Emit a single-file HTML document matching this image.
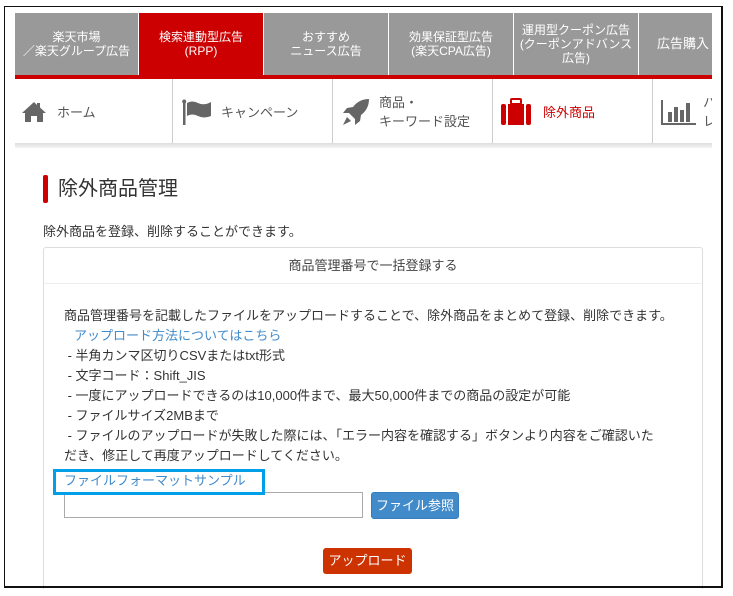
<!DOCTYPE html>
<html><head><meta charset="utf-8"><style>
*{box-sizing:border-box;margin:0;padding:0}
body{width:733px;height:596px;background:#fff;font-family:"Liberation Sans","Noto Sans CJK JP",sans-serif;color:#333;position:relative;overflow:hidden}
.frame{position:absolute;left:4px;top:6px;width:719px;height:582px;border:2px solid #111;border-top-width:1px;border-left-width:1px;z-index:5}
.clip{position:absolute;left:15px;top:13px;width:697px;height:135px;overflow:hidden}
.tabs{position:absolute;left:0;top:0;height:62px;width:760px;background:#999}
.tab{position:absolute;top:0;height:62px;width:125px;color:#fff;font-size:12px;line-height:14px;text-align:center;display:flex;align-items:center;justify-content:center;border-right:1px solid #fff}
.redline{position:absolute;left:0;top:62px;width:697px;height:4px;background:#c00}
.nav{position:absolute;left:0;top:66px;height:65px;width:760px;background:#fff}
.ni{position:absolute;top:0;height:65px;border-right:1px solid #ccc;display:flex;align-items:center;font-size:13px;color:#555}
.shadow{position:absolute;left:0;top:130px;width:697px;height:5px;background:linear-gradient(#ddd,#f4f4f4)}
.abs{position:absolute}
</style></head><body>
<div class="frame"></div>
<div class="clip">
 <div class="tabs">
  <div class="tab" style="left:0;width:124px">楽天市場<br>／楽天グループ広告</div>
  <div class="tab" style="left:124px;background:#c00">検索連動型広告<br>(RPP)</div>
  <div class="tab" style="left:249px">おすすめ<br>ニュース広告</div>
  <div class="tab" style="left:374px">効果保証型広告<br>(楽天CPA広告)</div>
  <div class="tab" style="left:499px">運用型クーポン広告<br>(クーポンアドバンス<br>広告)</div>
  <div class="tab" style="left:624px;justify-content:flex-start;padding-left:18px;font-size:13px">広告購入</div>
 </div>
 <div class="redline"></div>
 <div class="nav">
  <div class="ni" style="left:0;width:158px;padding-left:6px">
   <svg width="26" height="22" viewBox="0 0 26 22"><path d="M13 1 L1 12 L4 12 L4 21 L10 21 L10 15 L16 15 L16 21 L22 21 L22 12 L25 12 L19 6.5 L19 2 L16 2 L16 4 Z" fill="#666"/></svg>
   <span style="margin-left:10px">ホーム</span></div>
  <div class="ni" style="left:158px;width:160px;padding-left:8px">
   <svg width="32" height="26" viewBox="0 0 32 26"><rect x="2" y="2" width="2.5" height="24" fill="#666"/><circle cx="3.2" cy="2.5" r="2" fill="#666"/><path d="M6 4 Q11 1 17 4 Q23 7 30 3 L30 17 Q23 20 17 17 Q11 14 6 17 Z" fill="#666"/></svg>
   <span style="margin-left:8px">キャンペーン</span></div>
  <div class="ni" style="left:318px;width:160px;padding-left:8px">
   <svg width="30" height="30" viewBox="0 0 30 30"><path d="M28 2 Q18 2 12 10 L6 11 L2 16 L8 16 L14 22 L14 28 L19 24 L20 18 Q28 12 28 2Z M6 20 L2 28 L10 24Z" fill="#666"/></svg>
   <span style="margin-left:8px;line-height:19px">商品・<br>キーワード設定</span></div>
  <div class="ni" style="left:478px;width:160px;padding-left:7px;color:#c00">
   <svg width="32" height="28" viewBox="0 0 32 28"><rect x="11" y="1" width="10" height="5" rx="1" fill="none" stroke="#c00" stroke-width="2"/><rect x="1" y="6" width="5" height="21" rx="2" fill="#c00"/><rect x="8" y="6" width="16" height="21" fill="#c00"/><rect x="26" y="6" width="5" height="21" rx="2" fill="#c00"/></svg>
   <span style="margin-left:11px">除外商品</span></div>
  <div class="ni" style="left:638px;width:160px;padding-left:8px">
   <svg width="36" height="26" viewBox="0 0 36 26"><path d="M1 1 V25 H35" fill="none" stroke="#666" stroke-width="2"/><rect x="7" y="13" width="4" height="10" fill="#666"/><rect x="13" y="8" width="4" height="15" fill="#666"/><rect x="19" y="11" width="4" height="12" fill="#666"/><rect x="25" y="4" width="4" height="19" fill="#666"/></svg>
   <span style="margin-left:6px;line-height:19px">ハ<br>レ</span></div>
 </div>
 <div class="shadow"></div>
</div>

<div class="abs" style="left:43px;top:175px;width:5px;height:28px;background:#c00;border-radius:2px"></div>
<div class="abs" style="left:58px;top:175px;font-size:20px;line-height:28px;color:#333">除外商品管理</div>
<div class="abs" style="left:43px;top:223px;font-size:13px;line-height:18px">除外商品を登録、削除することができます。</div>

<div class="abs" style="left:43px;top:247px;width:660px;height:345px;border:1px solid #ddd;border-radius:3px">
 <div style="height:36px;border-bottom:1px solid #eee;text-align:center;font-size:13px;line-height:36px;color:#444">商品管理番号で一括登録する</div>
</div>
<div class="abs" style="left:64px;top:306px;font-size:13px;line-height:20px;color:#333;width:614px">
商品管理番号を記載したファイルをアップロードすることで、除外商品をまとめて登録、削除できます。<br>
<span style="color:#428bca;margin-left:10px">アップロード方法についてはこちら</span><br>
&nbsp;- 半角カンマ区切りCSVまたはtxt形式<br>
&nbsp;- 文字コード：Shift_JIS<br>
&nbsp;- 一度にアップロードできるのは10,000件まで、最大50,000件までの商品の設定が可能<br>
&nbsp;- ファイルサイズ2MBまで<br>
&nbsp;- ファイルのアップロードが失敗した際には、「エラー内容を確認する」ボタンより内容をご確認いた<br>だき、修正して再度アップロードしてください。
</div>
<div class="abs" style="left:64px;top:472px;font-size:13px;line-height:18px;color:#428bca">ファイルフォーマットサンプル</div>
<div class="abs" style="left:64px;top:492px;width:299px;height:26px;border:1px solid #aaa"></div>
<div class="abs" style="left:53px;top:469px;width:212px;height:26px;border:3px solid #00a0e9"></div>
<div class="abs" style="left:371px;top:492px;width:88px;height:27px;background:#428bca;border:1px solid #357ebd;border-radius:3px;color:#fff;font-size:13px;line-height:25px;text-align:center">ファイル参照</div>
<div class="abs" style="left:323px;top:548px;width:89px;height:26px;background:#cc3300;border-radius:3px;color:#fff;font-size:13px;line-height:26px;text-align:center">アップロード</div>
<div class="abs" style="left:0;top:589px;width:733px;height:7px;background:#fff;z-index:4"></div>
</body></html>
